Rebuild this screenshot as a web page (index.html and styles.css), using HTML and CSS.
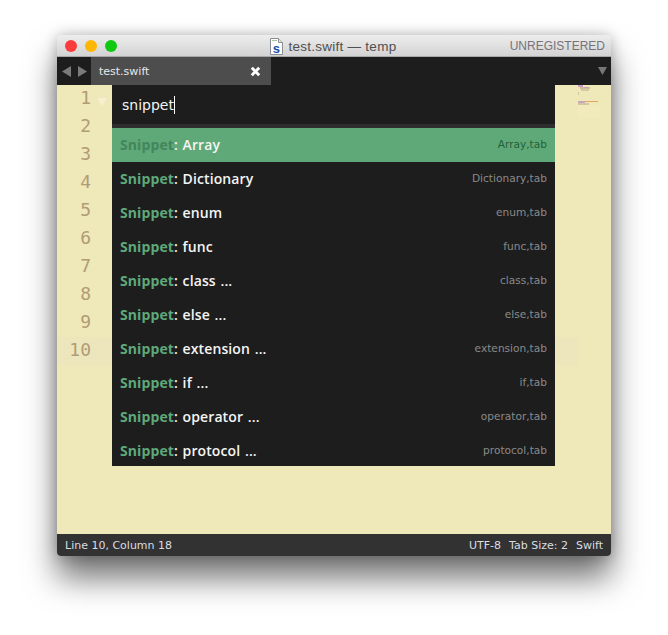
FILE: index.html
```html
<!DOCTYPE html>
<html lang="en">
<head>
<meta charset="utf-8">
<title>test.swift — temp</title>
<link rel="stylesheet" href="styles.css">
</head>
<body>
<div class="window">
  <header class="titlebar">
    <div class="lights"><span class="light red"></span><span class="light yellow"></span><span class="light green"></span></div>
    <div class="title">
      <svg class="file-icon" width="13" height="17" viewBox="0 0 13 17"><path d="M.5.5h8l4 4v12H.5z" fill="#fff" stroke="#8a8f95"/><path d="M8.5.5v4h4" fill="#dbe6d4" stroke="#8a8f95"/><rect x="2" y="2" width="5" height="1" fill="#a9c49d"/><text x="6.5" y="14.5" class="file-s">s</text></svg>
      <span>test.swift — temp</span>
    </div>
    <div class="unregistered">UNREGISTERED</div>
  </header>
  <div class="tabbar">
    <div class="arrows">
      <svg width="10" height="11" viewBox="0 0 10 11"><path d="M0 5.5 9 0v11z" fill="#7a7a7a"/></svg>
      <svg width="10" height="11" viewBox="0 0 10 11"><path d="M10 5.5 1 0v11z" fill="#7a7a7a"/></svg>
    </div>
    <div class="tab">
      <span>test.swift</span>
      <svg width="11" height="11" viewBox="0 0 11 11"><path d="M1.8 1.8l7.4 7.4M9.2 1.8l-7.4 7.4" stroke="#fff" stroke-width="3"/></svg>
    </div>
    <svg class="tab-menu" width="9" height="8" viewBox="0 0 9 8"><path d="M0 0h9L4.5 8z" fill="#777"/></svg>
  </div>
  <main class="editor">
    <div class="gutter">
      <div class="ln">1<svg class="fold" width="10" height="8" viewBox="0 0 10 8"><path d="M0 0h10L5 8z" fill="#f5f0cf"/></svg></div>
      <div class="ln">2</div><div class="ln">3</div><div class="ln">4</div><div class="ln">5</div>
      <div class="ln">6</div><div class="ln">7</div><div class="ln">8</div><div class="ln">9</div>
      <div class="ln current">10</div>
    </div>
    <div class="code"><div class="current-line"></div></div>
    <div class="minimap">
      <svg width="33" height="32" viewBox="0 0 33 32"><rect y="20" width="22" height="12" fill="#f1eabd"/><rect x="0" y="0" width="5" height="2" fill="#c99cc0"/><rect x="2" y="2" width="10" height="2" fill="#cdbb9a"/><rect x="3" y="4" width="8" height="2" fill="#d4c9a0"/><rect x="6" y="2" width="4" height="1" fill="#c99cc0"/><rect x="0" y="7" width="1" height="3" fill="#d0c7a0"/><rect x="0" y="16" width="7" height="2" fill="#c9a6b8"/><rect x="7" y="16" width="13" height="1" fill="#e3a860"/><rect x="0" y="18" width="11" height="2" fill="#d3c6a0"/></svg>
    </div>
    <section class="palette">
      <div class="query"><span class="query-text">snippet</span><span class="caret"></span></div>
      <ul class="results">
        <li class="row selected"><span class="name"><b>Snippet</b>: Array</span><span class="trigger">Array,tab</span></li>
        <li class="row"><span class="name"><b>Snippet</b>: Dictionary</span><span class="trigger">Dictionary,tab</span></li>
        <li class="row"><span class="name"><b>Snippet</b>: enum</span><span class="trigger">enum,tab</span></li>
        <li class="row"><span class="name"><b>Snippet</b>: func</span><span class="trigger">func,tab</span></li>
        <li class="row"><span class="name"><b>Snippet</b>: class ...</span><span class="trigger">class,tab</span></li>
        <li class="row"><span class="name"><b>Snippet</b>: else ...</span><span class="trigger">else,tab</span></li>
        <li class="row"><span class="name"><b>Snippet</b>: extension ...</span><span class="trigger">extension,tab</span></li>
        <li class="row"><span class="name"><b>Snippet</b>: if ...</span><span class="trigger">if,tab</span></li>
        <li class="row"><span class="name"><b>Snippet</b>: operator ...</span><span class="trigger">operator,tab</span></li>
        <li class="row"><span class="name"><b>Snippet</b>: protocol ...</span><span class="trigger">protocol,tab</span></li>
      </ul>
    </section>
  </main>
  <footer class="statusbar">
    <span class="status-left">Line 10, Column 18</span>
    <span class="status-right"><span>UTF-8</span><span>Tab Size: 2</span><span>Swift</span></span>
  </footer>
</div>
</body>
</html>
```
FILE: styles.css
```css
* { box-sizing: border-box; }
html, body { margin: 0; height: 100%; background: #fff; overflow: hidden; }
body { padding: 35px 57px 0; font-family: "DejaVu Sans", sans-serif; }
.window {
  width: 554px; height: 521px; display: flex; flex-direction: column;
  border-radius: 5px 5px 4px 4px; overflow: hidden;
  box-shadow: 0 22px 32px rgba(0,0,0,.55), 0 0 14px rgba(0,0,0,.25);
}
.titlebar {
  height: 22px; flex: none; display: grid; grid-template-columns: 1fr auto 1fr; align-items: center;
  background: linear-gradient(#ededed, #d3d3d3); border-bottom: 1px solid #a8a8a8;
  padding: 1px 6px 0 8px; color: #4f4f4f; font-family: "Liberation Sans", sans-serif; font-size: 13.5px;
}
.lights { display: flex; gap: 8px; }
.light { width: 12px; height: 12px; border-radius: 50%; }
.red { background: #fc3c3c; }
.yellow { background: #fdb700; }
.green { background: #12c912; }
.title { display: flex; align-items: center; gap: 6px; letter-spacing: .25px; margin-right: 4px; }
.file-s { font: bold 13px "Liberation Sans", sans-serif; fill: #1a4fa8; text-anchor: middle; }
.unregistered { justify-self: end; color: #77727a; font-size: 12px; }
.tabbar { height: 28px; flex: none; display: flex; align-items: stretch; background: #1d1d1d; }
.arrows { width: 34px; display: flex; align-items: center; justify-content: center; gap: 5px; padding-left: 1px; }
.tab {
  width: 180px; display: flex; align-items: center; justify-content: space-between;
  padding: 0 10px 0 8px; background: #4d4d4d; color: #e8e8e8; font: 11px "DejaVu Sans", sans-serif;
}
.tab-menu { margin: 10px 4px 0 auto; }
.editor { flex: 1; position: relative; display: flex; background: #efe8b8; }
.gutter { width: 55px; flex: none; font: 500 18px/26px "DejaVu Sans Mono", monospace; color: #b09c76; }
.ln { position: relative; height: 28px; text-align: right; padding-right: 21px; }
.ln.current { background: #ede6bc; }
.fold { position: absolute; left: 40px; top: 13px; }
.code { flex: 1; padding-top: 252px; }
.current-line { height: 28px; background: #ede6bc; }
.minimap { width: 33px; flex: none; }
.minimap svg { display: block; }
.palette { position: absolute; left: 55px; top: 0; width: 443px; height: 381px; overflow: hidden; background: #1d1d1d; }
.query { height: 39px; display: flex; align-items: center; padding-left: 10px; color: #f4f4f4; font-size: 14px; font-weight: 500; }
.caret { width: 1px; height: 18px; background: #fff; }
.results { margin: 4px 0 0; padding: 0; list-style: none; position: relative; }
.palette::before { content: ""; position: absolute; left: 0; right: 0; top: 39px; height: 4px; background: #2e2e2e; }
.row { height: 34px; display: flex; align-items: center; justify-content: space-between; padding: 0 8px 2px; color: #f4f4f4; font: 600 14px "Open Sans", sans-serif; }
.name { letter-spacing: .1px; word-spacing: 1px; }
.row b { color: #5ea97a; font-weight: 700; }
.trigger { color: #8a8a8a; font: 10.6px "DejaVu Sans", sans-serif; }
.selected { background: #5fa979; }
.selected b { color: #43855c; }
.selected .trigger { color: #22613a; }
.statusbar {
  height: 22px; flex: none; display: flex; align-items: center; justify-content: space-between;
  padding: 0 8px; background: #323232; color: #d9dde2; font-size: 11px;
}
.status-right { display: flex; gap: 8px; }
```
